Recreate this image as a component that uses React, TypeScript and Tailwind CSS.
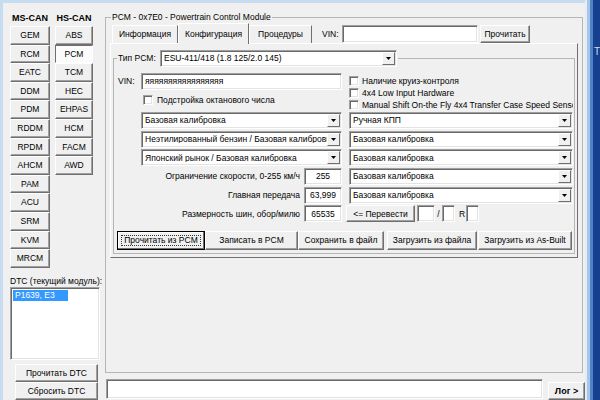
import type { ReactNode } from 'react';

const raisedCls =
  'flex items-center justify-center whitespace-nowrap bg-[#f0f0f0] border border-t-white border-l-white border-r-[#6f6f6f] border-b-[#6f6f6f] shadow-[inset_-1px_-1px_0_#a0a0a0]';
const sunkenCls =
  'bg-white border border-t-[#a0a0a0] border-l-[#a0a0a0] border-r-white border-b-white shadow-[inset_1px_1px_0_#696969,inset_-1px_-1px_0_#e3e3e3]';

const Btn = ({ children, className = '' }: { children?: ReactNode; className?: string }) => (
  <button className={`${raisedCls} ${className}`}>{children}</button>
);

const Arrow = () => (
  <svg width="5" height="3" viewBox="0 0 5 3">
    <path d="M0 0h5L2.5 3z" fill="#000" />
  </svg>
);

const Combo = ({ text, className = '' }: { text: string; className?: string }) => (
  <div className={`flex h-[17px] items-center ${sunkenCls} ${className}`}>
    <span className="flex-1 overflow-hidden whitespace-nowrap pl-[3px]">{text}</span>
    <span className="mr-[1px] flex h-[13px] w-[13px] shrink-0 items-center justify-center bg-[#f0f0f0] border border-t-white border-l-white border-r-[#6f6f6f] border-b-[#6f6f6f]">
      <Arrow />
    </span>
  </div>
);

const Check = ({ label, className = '' }: { label: string; className?: string }) => (
  <div className={`flex h-[10px] items-center gap-[3px] overflow-hidden whitespace-nowrap ${className}`}>
    <span className={`h-[10px] w-[10px] shrink-0 ${sunkenCls}`} />
    <span>{label}</span>
  </div>
);

const LabeledBox = ({ label, value }: { label: string; value: string }) => (
  <div className="flex h-[17px] items-center justify-end gap-[4px]">
    <span className="whitespace-nowrap">{label}</span>
    <div className={`flex h-full w-[38px] items-center justify-center ${sunkenCls}`}>{value}</div>
  </div>
);

export default function App() {
  const msCan = ['GEM', 'RCM', 'EATC', 'DDM', 'PDM', 'RDDM', 'RPDM', 'AHCM', 'PAM', 'ACU', 'SRM', 'KVM', 'MRCM'];
  const hsCan = ['ABS', 'PCM', 'TCM', 'HEC', 'EHPAS', 'HCM', 'FACM', 'AWD'];

  return (
    <div className="flex h-[400px] w-[600px] overflow-hidden bg-[#173f8f] font-['Liberation_Sans',Arial,sans-serif] text-[8.5px] leading-none text-black">
      <div className="flex w-[585px] shrink-0 flex-col bg-[#f0f0f0]">
        {/* window frame top */}
        <div className="h-[3px] shrink-0 bg-[#c7dbf1]" />
        <div className="flex min-h-0 flex-1">
          <div className="w-[3px] shrink-0 bg-[#c7dbf1]" />

          {/* Left panel: modules + DTC */}
          <div className="flex w-[100px] shrink-0 flex-col pl-[7px] pt-[11px]">
            <div className="flex gap-[5px]">
              <div className="flex w-[40px] flex-col">
                <div className="mb-[1px] h-[11px] text-center text-[9px] font-bold">MS-CAN</div>
                {msCan.map((m) => (
                  <Btn key={m} className="h-[18.6px] w-full">
                    {m}
                  </Btn>
                ))}
              </div>
              <div className="flex w-[38px] flex-col">
                <div className="mb-[1px] h-[11px] text-center text-[9px] font-bold">HS-CAN</div>
                {hsCan.map((m) =>
                  m === 'PCM' ? (
                    <div
                      key={m}
                      className="flex h-[18.6px] w-full items-center justify-center border border-t-[#6f6f6f] border-l-[#6f6f6f] border-r-white border-b-white bg-[#fbfbfb]"
                    >
                      {m}
                    </div>
                  ) : (
                    <Btn key={m} className="h-[18.6px] w-full">
                      {m}
                    </Btn>
                  )
                )}
              </div>
            </div>

            <div className="mt-[9px] h-[8px] whitespace-nowrap">DTC (текущий модуль):</div>
            <div className={`mt-[2px] h-[77px] w-[90px] p-[2px] ${sunkenCls}`}>
              <div className="flex h-[11px] w-[55px] items-center bg-[#3399ff] pl-[2px] text-white">P1639, E3</div>
            </div>
            <Btn className="ml-[5px] mt-[4px] h-[19px] w-[83px]">Прочитать DTC</Btn>
            <Btn className="ml-[5px] h-[19px] w-[83px]">Сбросить DTC</Btn>
          </div>

          {/* Main area */}
          <div className="flex w-[482px] shrink-0 flex-col">
            <fieldset className="mx-[2px] mt-[9px] block h-[366px] border border-[#b5b5b5]">
              <legend className="ml-[5px] h-[11px] px-[1px] leading-[11px]">PCM - 0x7E0 - Powertrain Control Module</legend>
              <div className="pl-[4px]">
                {/* tabs + VIN */}
                <div className="flex h-[20px] items-end">
                  <div className="ml-[2px] flex h-[18px] w-[66px] items-center justify-center border border-b-0 border-t-white border-l-white border-r-[#6f6f6f]">
                    Информация
                  </div>
                  <div className="relative z-10 -mb-px flex h-[21px] w-[71px] items-center justify-center border border-b-0 border-t-white border-l-white border-r-[#6f6f6f] bg-[#f0f0f0]">
                    Конфигурация
                  </div>
                  <div className="flex h-[18px] w-[63px] items-center justify-center border border-b-0 border-t-white border-l-white border-r-[#6f6f6f]">
                    Процедуры
                  </div>
                  <span className="mb-[5px] ml-[10px] w-[20px]">VIN:</span>
                  <div className={`h-[18px] w-[136px] ${sunkenCls}`} />
                  <Btn className="ml-[2px] h-[18px] w-[50px]">Прочитать</Btn>
                </div>

                {/* tab page */}
                <div className="h-[215px] w-[468px] border border-t-white border-l-white border-r-[#6f6f6f] border-b-[#6f6f6f]">
                  <fieldset className="ml-[2px] mt-[6px] block h-[204px] w-[462px] border border-[#b5b5b5]">
                    <legend className="ml-[3px] px-[1px]">
                      <div className="flex h-[17px] items-center">
                        <span className="w-[42px]">Тип PCM:</span>
                        <Combo text="ESU-411/418 (1.8 125/2.0 145)" className="w-[237px]" />
                      </div>
                    </legend>

                    <div className="pl-[4px] pt-[6px]">
                      <div className="grid grid-cols-[224px_224px] gap-x-[7px]">
                        {/* top block */}
                        <div className="h-[39px]">
                          <div className="flex h-[17px] items-center">
                            <span className="w-[23px]">VIN:</span>
                            <div className={`flex h-full flex-1 items-center pl-[3px] ${sunkenCls}`}>яяяяяяяяяяяяяяяяя</div>
                          </div>
                          <Check label="Подстройка октанового числа" className="ml-[25px] mt-[5px] gap-[4px]" />
                        </div>
                        <div className="flex h-[39px] flex-col gap-[2px] pt-[3px]">
                          <Check label="Наличие круиз-контроля" />
                          <Check label="4x4 Low Input Hardware" />
                          <Check label="Manual Shift On-the Fly 4x4 Transfer Case Speed Sensor" />
                        </div>
                      </div>

                      <div className="grid grid-cols-[224px_224px] gap-x-[7px] gap-y-[1.7px]">
                        <Combo text="Базовая калибровка" className="ml-[23px]" />
                        <Combo text="Ручная КПП" />
                        <Combo text="Неэтилированный бензин / Базовая калибровка" className="ml-[23px]" />
                        <Combo text="Базовая калибровка" />
                        <Combo text="Японский рынок / Базовая калибровка" className="ml-[23px]" />
                        <Combo text="Базовая калибровка" />
                        <LabeledBox label="Ограничение скорости, 0-255 км/ч" value="255" />
                        <Combo text="Базовая калибровка" />
                        <LabeledBox label="Главная передача" value="63,999" />
                        <Combo text="Базовая калибровка" />
                        <LabeledBox label="Размерность шин, обор/милю" value="65535" />
                        <div className="flex h-[17px] items-center">
                          <Btn className="-ml-[3px] h-full w-[69px]">&lt;= Перевести</Btn>
                          <div className={`ml-[2px] h-full w-[18px] ${sunkenCls}`} />
                          <span className="w-[7px] text-center">/</span>
                          <div className={`h-full w-[13px] ${sunkenCls}`} />
                          <span className="ml-[4px] w-[7px]">R</span>
                          <div className={`h-full w-[13px] ${sunkenCls}`} />
                        </div>
                      </div>

                      {/* action buttons */}
                      <div className="-ml-[1px] mt-[8.5px] flex h-[19px]">
                        <button className="flex h-full w-[88px] items-stretch border border-black bg-[#f0f0f0] p-[3px] shadow-[inset_-1px_-1px_0_#6f6f6f,inset_1px_1px_0_#ffffff]">
                          <span className="flex flex-1 items-center justify-center whitespace-nowrap border border-dotted border-[#333]">
                            Прочитать из PCM
                          </span>
                        </button>
                        <Btn className="h-full w-[93px]">Записать в PCM</Btn>
                        <Btn className="h-full w-[86px]">Сохранить в файл</Btn>
                        <Btn className="ml-[3px] h-full w-[90px]">Загрузить из файла</Btn>
                        <Btn className="ml-[1px] h-full w-[94px]">Загрузить из As-Built</Btn>
                      </div>
                    </div>
                  </fieldset>
                </div>
              </div>
            </fieldset>

            {/* log line */}
            <div className="mt-[6px] flex items-start">
              <div className={`ml-[3px] h-[20px] w-[437px] ${sunkenCls}`} />
              <Btn className="ml-[5px] mt-[3px] h-[18px] w-[37px] text-[9px] font-bold">Лог &gt;</Btn>
            </div>
          </div>
        </div>
      </div>

      {/* desktop edge on the right */}
      <div className="flex w-[15px] shrink-0">
        <div className="w-[2px] bg-[#e4edf7]" />
        <div className="w-[3px] bg-[#a9c6e6]" />
        <div className="w-[3px] bg-[#4f83c7]" />
        <div className="flex-1 pl-[1px] pt-[47px] text-[10px] text-[#d6dde8]">T</div>
      </div>
    </div>
  );
}
